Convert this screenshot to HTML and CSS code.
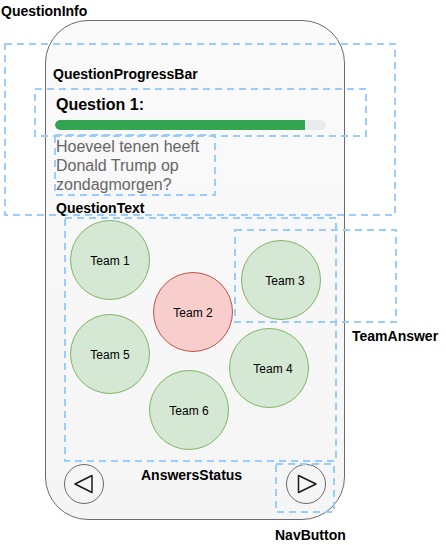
FILE: index.html
```html
<!DOCTYPE html>
<html lang="en">

<head>
    <meta charset="UTF-8">
    <meta name="viewport" content="width=device-width, initial-scale=1.0">
    <title>Question Screen Wireframe</title>
    <link rel="stylesheet" href="styles.css">
</head>

<body>
    <main class="canvas">
        <!-- phone frame -->
        <div class="phone">
            <section class="question-info">
                <h2 class="question-title">Question 1:</h2>
                <div class="progress">
                    <div class="progress-fill" style="width: 250px;"></div>
                </div>
                <p class="question-text">Hoeveel tenen heeft<br>Donald Trump op<br>zondagmorgen?</p>
            </section>

            <section class="answers">
                <div class="team team-1">Team 1</div>
                <div class="team team-2 wrong">Team 2</div>
                <div class="team team-3 shifted">Team 3</div>
                <div class="team team-4 shifted">Team 4</div>
                <div class="team team-5">Team 5</div>
                <div class="team team-6">Team 6</div>
            </section>

            <nav class="nav-row">
                <button class="nav-btn" type="button" aria-label="Previous">
                    <svg width="40" height="40" viewBox="0 0 40 40">
                        <circle cx="20" cy="20" r="19.5" fill="none" stroke="#6b6b6b" stroke-width="1" />
                        <polygon points="11,20 28,11.5 28,28.5" fill="none" stroke="#1a1a1a" stroke-width="1.5" stroke-linejoin="round" />
                    </svg>
                </button>
                <button class="nav-btn" type="button" aria-label="Next">
                    <svg width="40" height="40" viewBox="0 0 40 40">
                        <circle cx="20" cy="20" r="19.5" fill="none" stroke="#6b6b6b" stroke-width="1" />
                        <polygon points="12.5,11.5 12.5,28.5 30,20" fill="none" stroke="#1a1a1a" stroke-width="1.5" stroke-linejoin="round" />
                    </svg>
                </button>
            </nav>
        </div>

        <!-- annotation boxes -->
        <svg class="boxes" width="446" height="545" viewBox="0 0 446 545">
            <rect x="5" y="44" width="390" height="171" />
            <rect x="35" y="89" width="331" height="47" />
            <rect x="55" y="135" width="160" height="60" />
            <rect x="65" y="218" width="271" height="243" />
            <rect x="235" y="230" width="161" height="92" />
            <rect x="276" y="464" width="58" height="48" />
        </svg>

        <!-- annotation labels -->
        <span class="label label-info">QuestionInfo</span>
        <span class="label label-progress">QuestionProgressBar</span>
        <span class="label label-text">QuestionText</span>
        <span class="label label-team">TeamAnswer</span>
        <span class="label label-answers">AnswersStatus</span>
        <span class="label label-nav">NavButton</span>
    </main>
</body>

</html>
```

FILE: styles.css
```css
body {
    font-family: "Liberation Sans", Arial, Helvetica, sans-serif;
    margin: 0;
    padding: 0;
    background-color: #ffffff;
}

.canvas {
    position: relative;
    width: 446px;
    height: 545px;
    overflow: hidden;
}

/* phone frame */

.phone {
    position: absolute;
    left: 45px;
    top: 20px;
    width: 300px;
    height: 500px;
    box-sizing: border-box;
    border: 1px solid #6b6b6b;
    border-radius: 43px;
    background: linear-gradient(#fafafa, #f5f5f5);
    display: flex;
    flex-direction: column;
}

.question-info {
    padding: 75px 0 0 10px;
}

.question-title {
    margin: 0;
    font-size: 16px;
    line-height: 18px;
    font-weight: bold;
    color: #000;
}

.progress {
    margin: 6px 0 0 -1px;
    width: 271px;
    height: 10px;
    border-radius: 5px;
    background-color: #e9ecef;
    overflow: hidden;
}

.progress-fill {
    height: 100%;
    border-radius: 5px 0 0 5px;
    background-color: #33a44f;
}

.question-text {
    margin: 7px 0 0 0;
    font-size: 16px;
    line-height: 19px;
    color: #666666;
}

.answers {
    position: relative;
    height: 270px;
}

.team {
    position: absolute;
    width: 80px;
    height: 80px;
    box-sizing: border-box;
    border-radius: 50%;
    border: 1px solid #82b366;
    background-color: #d5e8d4;
    display: flex;
    align-items: center;
    justify-content: center;
    padding-top: 2px;
    font-size: 12px;
    color: #000;
}

.team.wrong {
    border-color: #b85450;
    background-color: #f8cecc;
}

.team.shifted {
    padding-left: 8px;
}

.team-1 { left: 24px; top: 26px; }
.team-2 { left: 107px; top: 78px; }
.team-3 { left: 195px; top: 46px; }
.team-4 { left: 183px; top: 134px; }
.team-5 { left: 24px; top: 120px; }
.team-6 { left: 103px; top: 176px; }

.nav-row {
    display: flex;
    justify-content: space-between;
    padding: 0 18px;
}

.nav-btn {
    width: 40px;
    height: 40px;
    padding: 0;
    border: none;
    background: none;
    display: block;
}

.nav-btn svg {
    display: block;
}

/* annotations */

.boxes {
    position: absolute;
    left: 0;
    top: 0;
    pointer-events: none;
}

.boxes rect {
    fill: none;
    stroke: #99ccff;
    stroke-width: 2;
    stroke-dasharray: 7 5;
}

.label {
    position: absolute;
    font-size: 14px;
    line-height: 16px;
    font-weight: bold;
    color: #000;
    white-space: nowrap;
}

.label-info { left: 1px; top: 3px; }
.label-progress { left: 53px; top: 66px; }
.label-text { left: 56px; top: 200px; }
.label-team { left: 352px; top: 328px; }
.label-answers { left: 141px; top: 467px; }
.label-nav { left: 275px; top: 527px; }
```
